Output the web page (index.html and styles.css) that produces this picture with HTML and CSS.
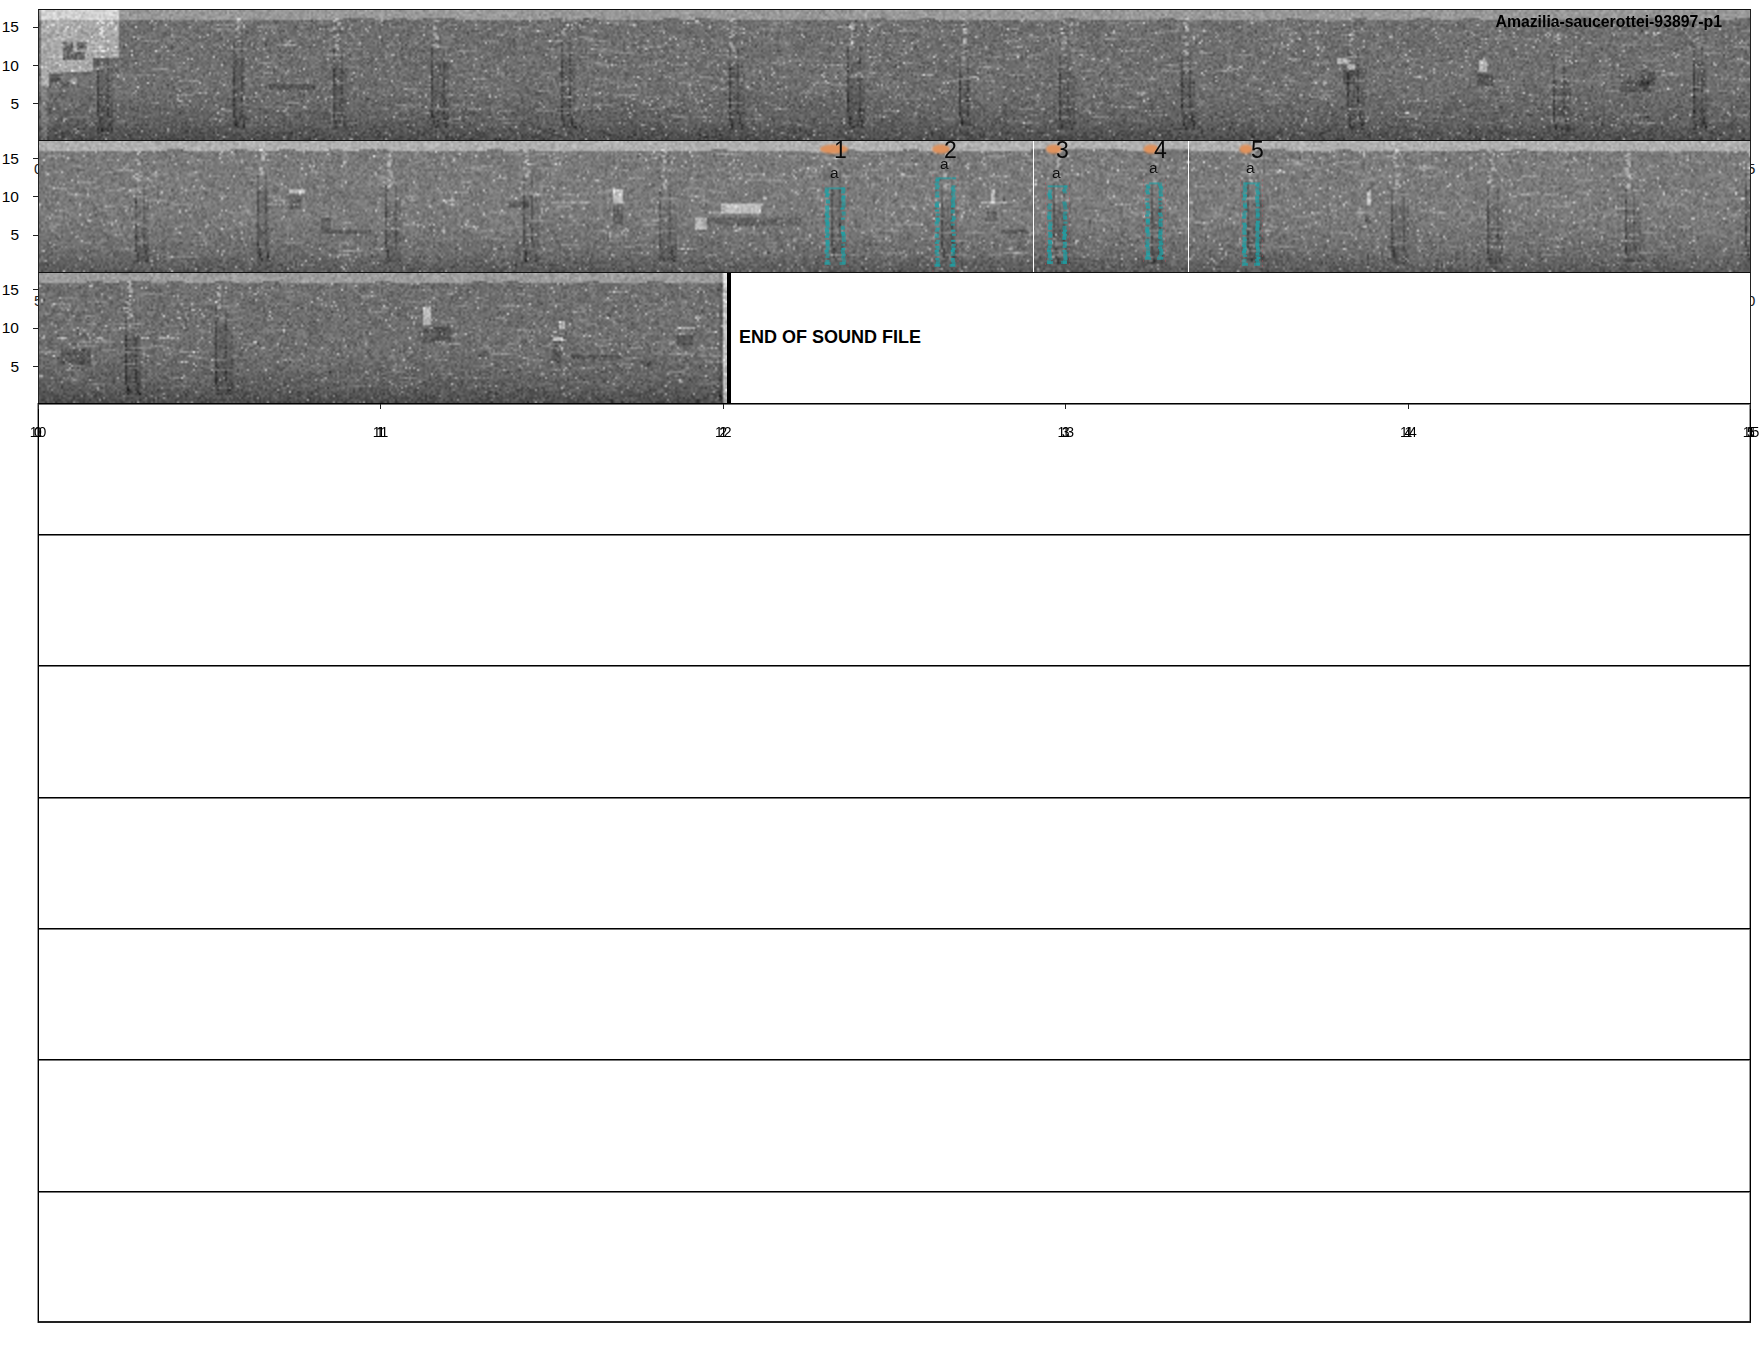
FILE: index.html
```html
<!DOCTYPE html>
<html lang="en">
<head>
<meta charset="utf-8">
<title>Amazilia-saucerottei-93897-p1</title>
<link rel="stylesheet" href="styles.css">
</head>
<body>
<main class="plot">
  <section class="row">
    <div class="gutter">
      <div class="ytick"><span>15</span></div>
      <div class="ytick"><span>10</span></div>
      <div class="ytick"><span>5</span></div>
    </div>
    <div class="panel panel-spec">
      <canvas class="spec" data-row="0"></canvas>
      <h1 class="title">Amazilia-saucerottei-93897-p1</h1>
    </div>
  </section>

  <section class="row">
    <span class="ghost ghost-left">0</span>
    <span class="ghost ghost-right">5</span>
    <div class="gutter">
      <div class="ytick"><span>15</span></div>
      <div class="ytick"><span>10</span></div>
      <div class="ytick"><span>5</span></div>
    </div>
    <div class="panel panel-spec">
      <canvas class="spec" data-row="1"></canvas>
      <i class="marker" style="left:994px"></i>
      <i class="marker" style="left:1149px"></i>
      <span class="num" style="left:795px">1</span>
      <span class="num" style="left:905px">2</span>
      <span class="num" style="left:1017px">3</span>
      <span class="num" style="left:1115px">4</span>
      <span class="num" style="left:1212px">5</span>
      <span class="tag" style="left:791px;top:24px">a</span>
      <span class="tag" style="left:901px;top:15px">a</span>
      <span class="tag" style="left:1013px;top:24px">a</span>
      <span class="tag" style="left:1110px;top:19px">a</span>
      <span class="tag" style="left:1207px;top:19px">a</span>
    </div>
  </section>

  <section class="row">
    <span class="ghost ghost-left">5</span>
    <span class="ghost ghost-right">0</span>
    <div class="gutter">
      <div class="ytick"><span>15</span></div>
      <div class="ytick"><span>10</span></div>
      <div class="ytick"><span>5</span></div>
    </div>
    <div class="panel panel-end">
      <canvas class="spec spec-short" data-row="2"></canvas>
      <div class="end-bar"></div>
      <p class="end-text">END OF SOUND FILE</p>
    </div>
  </section>

  <section class="row">
    <div class="gutter"></div>
    <div class="panel panel-empty xaxis">
      <div class="xtick"><b></b><span data-t="10">10</span></div>
      <div class="xtick"><b></b><span data-t="11">11</span></div>
      <div class="xtick"><b></b><span data-t="12">12</span></div>
      <div class="xtick"><b></b><span data-t="13">13</span></div>
      <div class="xtick"><b></b><span data-t="14">14</span></div>
      <div class="xtick"><b></b><span data-t="15">15</span></div>
    </div>
  </section>

  <section class="row"><div class="gutter"></div><div class="panel panel-empty"></div></section>
  <section class="row"><div class="gutter"></div><div class="panel panel-empty"></div></section>
  <section class="row"><div class="gutter"></div><div class="panel panel-empty"></div></section>
  <section class="row"><div class="gutter"></div><div class="panel panel-empty"></div></section>
  <section class="row"><div class="gutter"></div><div class="panel panel-empty"></div></section>
  <section class="row row-last"><div class="gutter"></div><div class="panel panel-empty panel-last"></div></section>
</main>
<script src="spectrogram.js"></script>
</body>
</html>
```

FILE: styles.css
```css
html, body {
  margin: 0;
  background: #fff;
  color: #000;
  font-family: "Liberation Sans", Arial, sans-serif;
}

.plot {
  width: 1751px;
  padding-top: 9px;
}

.row {
  position: relative;
  display: flex;
  height: 131.3px;
}

.row-last {
  height: 132px;
}

.gutter {
  flex: 0 0 38px;
  display: flex;
  flex-direction: column;
}

.ytick {
  flex: 0 0 38.3px;
  display: flex;
  align-items: center;
  justify-content: flex-end;
  gap: 14px;
  font-size: 15.5px;
  line-height: 1;
}

.ytick:first-child {
  margin-top: -1px;
}

.ytick::after {
  content: "";
  flex: 0 0 5px;
  height: 1px;
  background: #222;
}

.panel {
  position: relative;
  z-index: 1;
  flex: 1;
  min-width: 0;
  background: #fff;
  box-sizing: border-box;
}

.panel-spec,
.panel-end {
  border-top: 1px solid #111;
  border-left: 1px solid #222;
  border-right: 1px solid #222;
}

.panel-end {
  display: flex;
  align-items: center;
}

.spec {
  display: block;
  width: 100%;
  height: 100%;
}

.spec-short {
  flex: 0 0 688px;
  width: 688px;
}

.end-bar {
  flex: 0 0 4px;
  align-self: stretch;
  background: #000;
}

.end-text {
  margin: 0 0 2px 8px;
  font-size: 18px;
  font-weight: 700;
  line-height: 1;
}

.title {
  position: absolute;
  top: 3px;
  right: 28px;
  margin: 0;
  font-size: 15.8px;
  font-weight: 700;
  line-height: 18px;
}

.marker {
  position: absolute;
  top: 0;
  bottom: 0;
  width: 1px;
  background: #fff;
}

.num {
  position: absolute;
  top: -4px;
  font-size: 23px;
  line-height: 26px;
  color: #0a0a0a;
}

.tag {
  position: absolute;
  font-size: 15.5px;
  line-height: 16px;
  color: #111;
}

.ghost {
  position: absolute;
  top: 20px;
  font-size: 15px;
  line-height: 18px;
  color: #222;
}

.ghost-left {
  left: 34px;
}

.ghost-right {
  left: 1747px;
}

.panel-empty {
  border-top: 1px solid #000;
  border-left: 1px solid #000;
  border-right: 1px solid #000;
  box-shadow: inset 0 1px 0 #777, -1px 0 0 #999, inset -1px 0 0 #999;
}

.panel-last {
  border-bottom: 2px solid #222;
}

.xaxis {
  display: flex;
  justify-content: space-between;
  background: transparent;
}

.xtick {
  width: 0;
  display: flex;
  flex-direction: column;
  align-items: center;
}

.xtick:first-child {
  margin-left: -1px;
}

.xtick:last-child {
  margin-right: -1px;
}

.xtick b {
  flex: 0 0 5px;
  width: 1px;
  background: #222;
}

.xtick span {
  position: relative;
  left: -4px;
  margin-top: 15px;
  font-size: 14px;
  line-height: 16px;
  letter-spacing: -3.5px;
  white-space: nowrap;
}

.xtick span::after {
  content: attr(data-t);
  position: absolute;
  left: 4.5px;
  top: 0;
}
```

FILE: spectrogram.js
```js
(function () {
  function rng(seed) {
    return function () {
      seed |= 0; seed = seed + 0x6D2B79F5 | 0;
      var t = Math.imul(seed ^ seed >>> 15, 1 | seed);
      t = t + Math.imul(t ^ t >>> 7, 61 | t) ^ t;
      return ((t ^ t >>> 14) >>> 0) / 4294967296;
    };
  }

  var ORIGIN = 38;
  var TOPS = [9, 141, 272];
  var CELL = 2;

  var DATA = [
    {
      level: -2, band: 152,
      calls: [100, 236, 335, 434, 563, 731, 850, 962, 1061, 1184, 1350, 1555, 1695],
      dark: [[267, 74, 45, 5], [1341, 60, 12, 14], [1475, 64, 15, 12], [1620, 70, 30, 12], [1640, 60, 14, 16]],
      bright: [[1478, 49, 8, 12], [1335, 47, 12, 5], [1346, 53, 8, 6]]
    },
    {
      level: 10, band: 176,
      calls: [137, 260, 388, 525, 662, 834, 944, 1056, 1153, 1250, 1394, 1489, 1627, 1748],
      dark: [[288, 54, 12, 14], [320, 76, 10, 12], [320, 87, 50, 3], [612, 63, 10, 18], [700, 76, 100, 7], [985, 70, 10, 10], [1000, 87, 25, 3], [1364, 74, 6, 8], [508, 60, 20, 6]],
      bright: [[288, 48, 16, 4], [612, 47, 10, 14], [693, 75, 11, 12], [720, 62, 40, 10], [989, 48, 4, 14], [980, 59, 25, 2], [1366, 49, 4, 13]]
    },
    {
      level: -2, band: 156,
      calls: [127, 217],
      dark: [[60, 76, 30, 16], [422, 54, 28, 16], [478, 78, 8, 6], [552, 68, 8, 22], [570, 82, 50, 3], [640, 88, 10, 6], [675, 62, 15, 10]],
      bright: [[422, 33, 8, 17], [557, 48, 6, 8], [552, 63, 10, 3], [675, 54, 18, 2], [55, 63, 10, 2], [95, 63, 6, 2], [140, 63, 7, 2], [157, 63, 15, 2]]
    }
  ];

  var BOXES = [
    [834, 187, 263, 19], [944, 177, 265, 19], [1056, 185, 262, 18], [1153, 182, 258, 16], [1250, 182, 264, 16]
  ];
  var BLOBS = [[833, 28], [940, 18], [1053, 16], [1150, 15], [1245, 13]];

  function gauss(r) {
    return (r() + r() + r() + r() - 2) * 1.73;
  }

  function paint(canvas, index) {
    var data = DATA[index];
    var W = canvas.clientWidth, H = canvas.clientHeight;
    canvas.width = W; canvas.height = H;
    var cw = Math.ceil(W / CELL), ch = Math.ceil(H / CELL);
    var r = rng(4242 + index * 97);
    var field = new Float32Array(cw * ch);

    function add(px, py, pw, ph, d) {
      var x0 = Math.round((px - ORIGIN) / CELL), y0 = Math.round(py / CELL);
      var x1 = x0 + Math.max(1, Math.round(pw / CELL)), y1 = y0 + Math.max(1, Math.round(ph / CELL));
      for (var y = Math.max(0, y0); y < Math.min(ch, y1); y++) {
        for (var x = Math.max(0, x0); x < Math.min(cw, x1); x++) {
          field[y * cw + x] += d * (0.8 + r() * 0.4);
        }
      }
    }

    var wobble = [], w = 0;
    for (var i = 0; i < cw; i++) {
      if (i % 8 === 0) w = r() * 2.5;
      wobble.push(w);
    }

    for (var y = 0; y < ch; y++) {
      var py = y * CELL;
      for (var x = 0; x < cw; x++) {
        var v;
        if (py < 7.5 + wobble[x]) {
          v = data.band + gauss(r) * 11;
        } else {
          var base = 112 + data.level;
          if (py > 78) base -= (py - 78) * 0.45;
          if (py > 112) base -= (py - 112) * 0.65;
          v = base + gauss(r) * 12;
          if (r() < 0.03) v += 35 + r() * 45;
          if (r() < 0.02) v -= 20;
        }
        field[y * cw + x] = v;
      }
    }

    var streaks = Math.round(W * 0.3);
    for (var s = 0; s < streaks; s++) {
      var sx = ORIGIN + r() * W, sy = 10 + r() * 105;
      add(sx, sy, 5 + r() * 16, 1, 10 + r() * 20);
    }

    if (index === 0) {
      add(39, 0, 77, 48, 58);
      add(39, 48, 51, 13, 58);
      add(39, 61, 8, 14, 58);
      add(62, 31, 9, 9, -62);
      add(75, 31, 9, 8, -62);
      add(62, 41, 22, 7, -62);
      add(49, 63, 9, 8, -25);
      add(69, 67, 6, 6, 45);
      add(39, 75, 6, 56, 24);
      add(91, 48, 25, 13, -8);
    }

    data.calls.forEach(function (cx, n) {
      var rc = rng(1000 + index * 50 + n);
      var top = 28 + rc() * 24;
      var bot = 116 + rc() * 5;
      var wide = 11 + rc() * 8;
      cx -= 3;
      for (var py = 8; py < top; py += 2) {
        if (rc() < 0.6) add(cx + rc() * 4, py, 4, 2, 30 + rc() * 30);
      }
      for (var p = top; p < bot; p += 2) {
        var bend = p > 100 ? (p - 100) * 0.2 : 0;
        add(cx - 1 + bend, p, 2, 2, -20 - rc() * 14);
        add(cx + wide * 0.55 + bend, p, 2, 2, -14 - rc() * 12);
        if (p > top + 15) add(cx - 1, p, wide, 2, -13);
        if (rc() < 0.07) add(cx - 2, p, wide, 2, 28);
      }
    });

    data.dark.forEach(function (f) { add(f[0], f[1], f[2], f[3], -24); });
    data.bright.forEach(function (f) { add(f[0], f[1], f[2], f[3], 66); });

    if (index === 2) {
      add(718, 0, 3, 131, -14);
      add(721, 0, 6, 131, 85);
    }

    var off = document.createElement("canvas");
    off.width = cw; off.height = ch;
    var octx = off.getContext("2d");
    var img = octx.createImageData(cw, ch);
    for (var k = 0; k < field.length; k++) {
      var g = Math.max(20, Math.min(245, field[k]));
      img.data[k * 4] = img.data[k * 4 + 1] = img.data[k * 4 + 2] = g;
      img.data[k * 4 + 3] = 255;
    }
    octx.putImageData(img, 0, 0);

    var ctx = canvas.getContext("2d");
    ctx.imageSmoothingEnabled = true;
    ctx.imageSmoothingQuality = "high";
    ctx.filter = "blur(0.6px)";
    ctx.drawImage(off, 0, 0, cw * CELL, ch * CELL);
    ctx.filter = "none";

    if (index === 1) {
      overlays(ctx, TOPS[1], r);
    }
  }

  function overlays(ctx, top, r) {
    ctx.save();
    ctx.filter = "blur(0.6px)";
    BOXES.forEach(function (b) {
      var cx = b[0] - ORIGIN, y0 = b[1] - top, y1 = b[2] - top, half = b[3] / 2;
      for (var y = y0 - 3; y < y1 + 5; y += 5) {
        ctx.fillStyle = "rgba(190,80,90,0.4)";
        ctx.fillRect(cx - half - 3, y, 1, 2);
        ctx.fillRect(cx + half + 3, y, 1, 2);
      }
      for (var p = y0; p < y1; p += 2) {
        [-half + 1, half - 2].forEach(function (dx) {
          if (r() < 0.85) {
            ctx.fillStyle = "rgba(30,160,165," + (0.5 + r() * 0.45) + ")";
            ctx.fillRect(cx + dx - 2 + r() * 1.5, p, 4, 2);
          }
        });
      }
      ctx.fillStyle = "rgba(30,160,165,0.6)";
      ctx.fillRect(cx - half + 3, y0, half * 2 - 6, 2);
      ctx.fillRect(cx - half - 1, y1 - 2, 6, 3);
      ctx.fillRect(cx + half - 5, y1 - 2, 6, 3);
    });
    ctx.restore();

    BLOBS.forEach(function (b) {
      ctx.save();
      ctx.filter = "blur(1px)";
      ctx.fillStyle = "#e0925c";
      ctx.beginPath();
      ctx.ellipse(b[0] - ORIGIN, 8, b[1] / 2, 4.5, 0, 0, Math.PI * 2);
      ctx.fill();
      ctx.restore();
    });
  }

  document.querySelectorAll("canvas.spec").forEach(function (c) {
    paint(c, Number(c.getAttribute("data-row")));
  });
})();
```
